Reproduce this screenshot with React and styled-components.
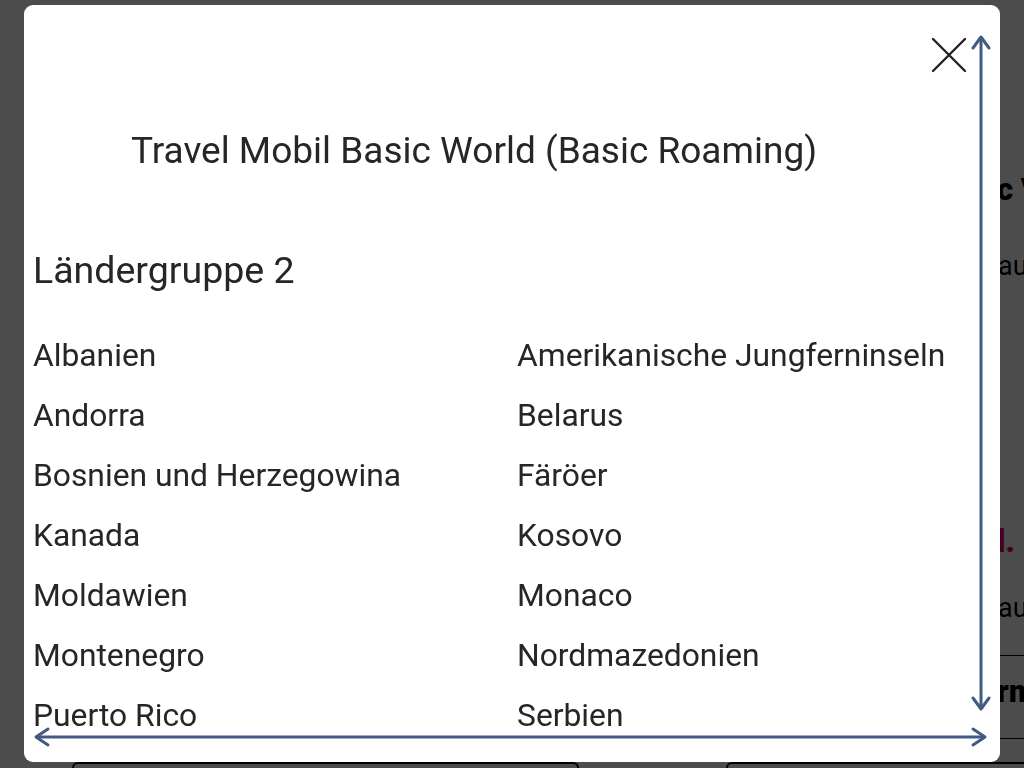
import React from 'react'
import styled, { createGlobalStyle } from 'styled-components'

const GlobalStyle = createGlobalStyle`
  html, body { margin: 0; padding: 0; }
  body {
    width: 1024px;
    height: 768px;
    overflow: hidden;
    background: #ffffff;
    font-family: Roboto, "Liberation Sans", sans-serif;
    color: #262626;
  }
`

const leftCountries = [
  'Albanien',
  'Andorra',
  'Bosnien und Herzegowina',
  'Kanada',
  'Moldawien',
  'Montenegro',
  'Puerto Rico',
]

const rightCountries = [
  'Amerikanische Jungferninseln',
  'Belarus',
  'Färöer',
  'Kosovo',
  'Monaco',
  'Nordmazedonien',
  'Serbien',
]

// page behind the dialog (only a thin strip of it shows)
const Page = styled.div`
  width: 1024px;
  height: 768px;
  overflow: hidden;
  display: flex;
  flex-direction: column;
  box-sizing: border-box;
  padding-top: 170px;
`

const PageHeading = styled.div`
  padding-left: 997px;
  white-space: nowrap;
  font-size: 31px;
  line-height: 40px;
  font-weight: 900;
  color: ${(p) => p.color || '#000'};
  margin-top: ${(p) => p.top || 0}px;
`

const PageText = styled.div`
  padding-left: 998px;
  white-space: nowrap;
  font-size: 27px;
  line-height: 36px;
  color: #000;
  margin-top: ${(p) => p.top || 0}px;
`

const PageRule = styled.div`
  margin: ${(p) => p.top || 0}px 0 0 900px;
  border-top: 1px solid #000;
`

const Cards = styled.div`
  display: flex;
  gap: 147px;
  padding-left: 72px;
  margin-top: auto;
  height: 6px;
`

const Card = styled.div`
  flex: 0 0 ${(p) => p.w}px;
  border: 2px solid #000;
  border-bottom: none;
  border-radius: 12px 12px 0 0;
`

const Overlay = styled.div`
  position: fixed;
  inset: 0;
  background: rgba(0, 0, 0, 0.7);
`

const Modal = styled.div`
  position: fixed;
  top: 5px;
  left: 24px;
  width: 976px;
  height: 757px;
  background: #fff;
  border-radius: 9px;
  overflow: hidden;
`

const Scroll = styled.div`
  height: 100%;
  box-sizing: border-box;
  padding: 0 0 0 9px;
  display: flex;
  flex-direction: column;
`

const CloseRow = styled.div`
  display: flex;
  justify-content: flex-end;
  padding: 28px 29px 0 0;
  height: 44px;
`

const CloseButton = styled.button`
  width: 44px;
  height: 44px;
  padding: 0;
  border: none;
  background: transparent;
  display: flex;
  align-items: center;
  justify-content: center;
`

const Title = styled.h2`
  margin: 52px 0 0 98px;
  font-size: 37px;
  font-weight: 400;
  line-height: 44px;
  color: #262626;
  white-space: nowrap;
`

const Group = styled.h3`
  margin: 75px 0 0 0;
  font-size: 37.5px;
  font-weight: 400;
  line-height: 44px;
  color: #262626;
`

const Grid = styled.ul`
  list-style: none;
  margin: 43px 0 0 0;
  padding: 0;
  display: grid;
  grid-template-columns: 484px 484px;
  grid-auto-rows: 60px;
`

const Country = styled.li`
  font-size: 31.8px;
  line-height: 40px;
  color: #262626;
  white-space: nowrap;
`

const Arrows = styled.svg`
  position: absolute;
  inset: 0;
  pointer-events: none;
`

const CloseIcon = () => (
  <svg width="36" height="36" viewBox="0 0 36 36" fill="none" stroke="#222" strokeWidth="2.4" strokeLinecap="round">
    <path d="M2 2 L34 34 M34 2 L2 34" />
  </svg>
)

const App = () => {
  const rows = leftCountries.flatMap((c, i) => [c, rightCountries[i]])

  return (
    <>
      <GlobalStyle />
      <Page>
        <PageHeading>c Vorteile</PageHeading>
        <PageText top={38}>auf</PageText>
        <PageHeading top={238} color="#e20074">l.</PageHeading>
        <PageText top={28}>auf</PageText>
        <PageRule top={29} />
        <PageHeading top={16}>rm</PageHeading>
        <PageRule top={26} />
        <Cards>
          <Card w={503} />
          <Card w={400} />
        </Cards>
      </Page>
      <Overlay />
      <Modal>
        <Scroll>
          <CloseRow>
            <CloseButton aria-label="Schließen">
              <CloseIcon />
            </CloseButton>
          </CloseRow>
          <Title>Travel Mobil Basic World (Basic Roaming)</Title>
          <Group>Ländergruppe 2</Group>
          <Grid>
            {rows.map((c) => (
              <Country key={c}>{c}</Country>
            ))}
          </Grid>
        </Scroll>
        <Arrows width="976" height="757" viewBox="0 0 976 757" fill="none" stroke="#435a82" strokeWidth="3" strokeLinecap="round" strokeLinejoin="round">
          <path d="M957 33 L957 703" />
          <path d="M949 43 L957 32 L965 43" />
          <path d="M949 693 L957 704 L965 693" />
          <path d="M13 732 L960 732" />
          <path d="M24 724 L12 732 L24 740" />
          <path d="M949 724 L961 732 L949 740" />
        </Arrows>
      </Modal>
    </>
  )
}

export default App
